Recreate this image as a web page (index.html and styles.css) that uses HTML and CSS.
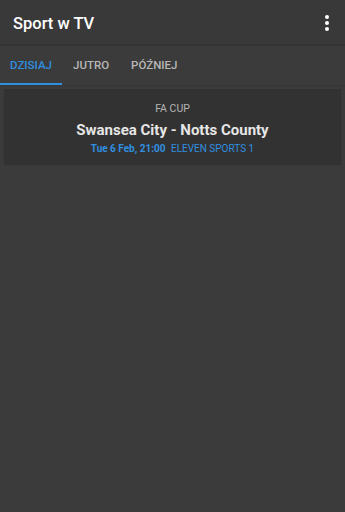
FILE: index.html
```html
<!DOCTYPE html>
<html lang="pl">
<head>
    <meta charset="UTF-8">
    <meta name="viewport" content="width=device-width, initial-scale=1.0">
    <title>Sport w TV</title>
    <link rel="stylesheet" href="styles.css">
</head>
<body>
    <div class="toolbar">
        <h1 class="title">Sport w TV</h1>
        <div class="menu">
            <svg width="4" height="16" viewBox="0 0 4 16">
                <circle cx="2" cy="2" r="2" fill="#fff"/>
                <circle cx="2" cy="8" r="2" fill="#fff"/>
                <circle cx="2" cy="14" r="2" fill="#fff"/>
            </svg>
        </div>
    </div>
    <div class="tabs">
        <div class="tab active">Dzisiaj</div>
        <div class="tab">Jutro</div>
        <div class="tab">Później</div>
    </div>
    <div class="list">
        <div class="card">
            <div class="league">FA CUP</div>
            <div class="match">Swansea City - Notts County</div>
            <div class="info">
                <span class="date">Tue 6 Feb, 21:00</span>
                <span class="channel">ELEVEN SPORTS 1</span>
            </div>
        </div>
    </div>
</body>
</html>
```

FILE: styles.css
```css
body {
    margin: 0;
    height: 512px;
    background-color: #3b3b3b;
    font-family: Roboto, "Noto Sans", sans-serif;
}
.toolbar {
    display: flex;
    justify-content: space-between;
    align-items: center;
    height: 44px;
    padding: 0 16px 0 13px;
    background-color: #393939;
    border-bottom: 2px solid #333333;
}
.title {
    margin: 0;
    padding-top: 2px;
    font-size: 16.5px;
    font-weight: 500;
    color: #ffffff;
}
.menu {
    display: flex;
    padding-top: 2px;
}
.tabs {
    display: flex;
    height: 39px;
    border-bottom: 1px solid #363636;
}
.tab {
    display: flex;
    align-items: center;
    padding: 0 11px;
    font-size: 11.5px;
    font-weight: 500;
    text-transform: uppercase;
    color: #b8b8b8;
    border-bottom: 2px solid transparent;
}
.tab:first-child {
    padding-left: 10px;
}
.tab.active {
    width: 41px;
    color: #2f8fe0;
    border-bottom-color: #2f8fe0;
}
.list {
    padding: 3px 4px;
}
.card {
    display: flex;
    flex-direction: column;
    align-items: center;
    padding: 13px 0 10px;
    background-color: #323232;
    box-shadow: 0 1px 1px rgba(0, 0, 0, 0.15);
}
.league {
    font-size: 10.5px;
    color: #b5b5b5;
}
.match {
    margin-top: 6px;
    font-size: 15px;
    font-weight: 700;
    color: #e6e6e6;
}
.info {
    margin-top: 4px;
    font-size: 10px;
    color: #2f8fe0;
}
.date {
    font-weight: 700;
    margin-right: 3px;
}
```
